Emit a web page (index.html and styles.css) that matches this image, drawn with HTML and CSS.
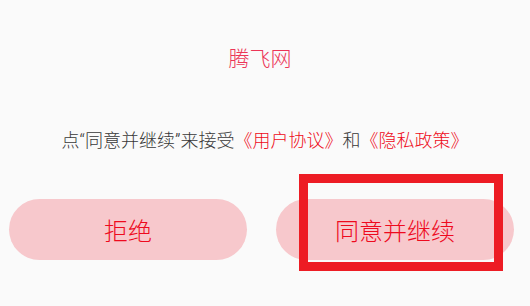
FILE: index.html
```html
<!DOCTYPE html>
<html lang="zh-CN">
<head>
<meta charset="utf-8">
<title>腾飞网</title>
<link rel="stylesheet" href="styles.css">
</head>
<body>
<div class="dialog">
  <div class="title">腾飞网</div>
  <div class="message">点“同意并继续”来接受<span class="link">《用户协议》</span>和<span class="link">《隐私政策》</span></div>
  <div class="actions">
    <button class="btn">拒绝</button>
    <button class="btn btn-agree">同意并继续<span class="highlight"></span></button>
  </div>
</div>
</body>
</html>
```

FILE: styles.css
```css
html, body {
  margin: 0;
  padding: 0;
  background: #fafafa;
}
body {
  width: 530px;
  height: 306px;
  overflow: hidden;
  font-family: Roboto, "Noto Sans CJK SC", sans-serif;
}
.dialog {
  display: flex;
  flex-direction: column;
  padding-top: 44px;
}
.title {
  font-size: 21px;
  line-height: 30px;
  font-weight: 300;
  color: #ec3658;
  text-align: center;
  padding-right: 10px;
}
.message {
  margin-top: 54px;
  font-size: 18px;
  line-height: 26px;
  font-weight: 300;
  color: #383838;
  text-align: center;
}
.link {
  color: #ee0a20;
}
.actions {
  display: flex;
  gap: 29px;
  margin-top: 45px;
  padding-left: 9px;
}
.btn {
  position: relative;
  width: 238px;
  height: 61px;
  border: none;
  border-radius: 31px;
  background: #f7c8cc;
  color: #ee0a1e;
  font-family: Roboto, "Noto Sans CJK SC", sans-serif;
  font-size: 24px;
  font-weight: 300;
  padding: 0;
}
.highlight {
  position: absolute;
  left: 23px;
  top: -25px;
  width: 186px;
  height: 79px;
  border: 9px solid #ed1c24;
  pointer-events: none;
}
```
